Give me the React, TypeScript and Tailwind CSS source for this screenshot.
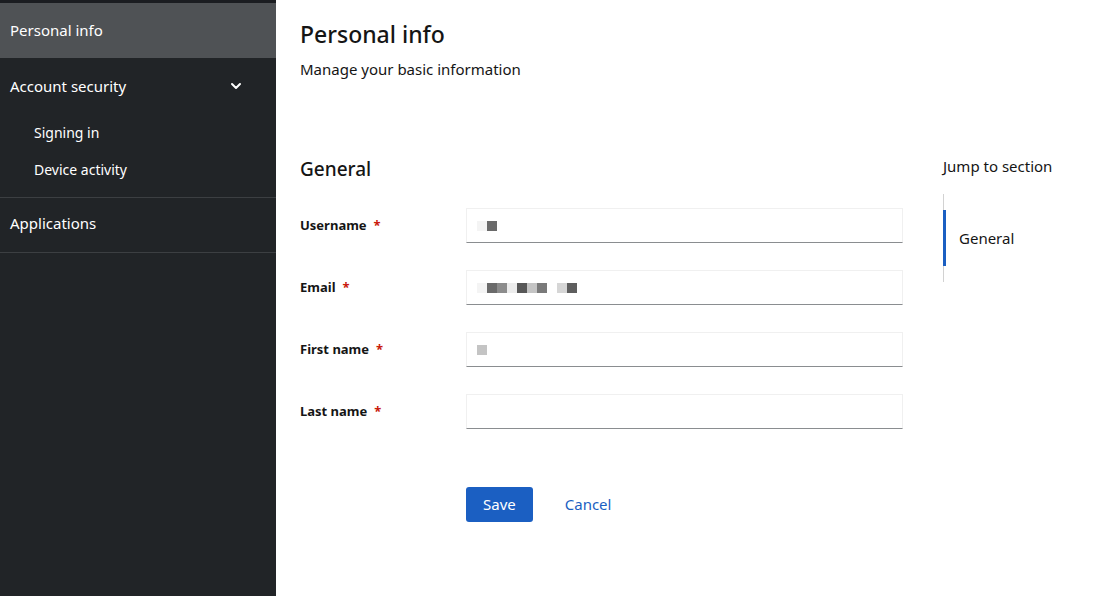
import { ChevronDown } from 'lucide-react';

const fields = [
  { label: 'Username', blocks: ['#f4f4f4', '#6a6a6a'] },
  { label: 'Email', blocks: ['#f4f4f4', '#6a6a6a', '#8c8c8c', '#ececec', '#575757', '#c4c4c4', '#7a7a7a', '#ffffff', '#d6d6d6', '#5e5e5e'] },
  { label: 'First name', blocks: ['#c4c4c4'] },
  { label: 'Last name', blocks: [] as string[] },
];

function Sidebar() {
  return (
    <nav className="w-[276px] shrink-0 bg-[#212427] text-white">
      <div className="h-[3px] bg-[#1b1d21]" />
      <div className="flex h-[55px] items-center bg-[#4f5255] px-[10px] text-[15px]">Personal info</div>
      <div className="border-b border-[#3c3f42] pb-[9px]">
        <div className="flex h-[56px] items-center justify-between pl-[10px] pr-[32px] text-[15px]">
          <span>Account security</span>
          <ChevronDown className="h-4 w-4" strokeWidth={3} />
        </div>
        <div className="flex h-[37px] items-center pl-[34px] text-[14px]">Signing in</div>
        <div className="flex h-[37px] items-center pl-[34px] text-[14px]">Device activity</div>
      </div>
      <div className="flex h-[55px] items-center border-b border-[#3c3f42] px-[10px] pb-[3px] text-[15px]">Applications</div>
    </nav>
  );
}

export default function App() {
  return (
    <div className="flex h-[596px] w-full bg-white font-['Noto_Sans',sans-serif] text-[#151515]">
      <Sidebar />
      <main className="flex flex-1">
        <div className="w-[627px] pl-[24px]">
          <h1 className="mt-[19px] text-[23px] font-medium leading-[30px]">Personal info</h1>
          <p className="mt-[8px] text-[15px] leading-[24px]">Manage your basic information</p>
          <h2 className="mt-[75px] text-[19px] font-medium leading-[26px]">General</h2>
          <form className="mt-[26px] flex flex-col gap-[27px]">
            {fields.map(f => (
              <div key={f.label} className="flex items-center">
                <label className="w-[166px] text-[13px] font-bold">
                  {f.label}
                  <span className="ml-[7px] text-[#c9190b]">*</span>
                </label>
                <div className="flex h-[35px] w-[437px] items-center border border-[#f0f0f0] border-b-[#8a8d90] px-[10px]">
                  {f.blocks.map((c, i) => (
                    <span key={i} className="h-[10px] w-[10px]" style={{ backgroundColor: c }} />
                  ))}
                </div>
              </div>
            ))}
            <div className="ml-[166px] mt-[31px] flex items-center gap-[16px]">
              <button type="button" className="h-[35px] rounded-[3px] bg-[#1b5fc2] px-[17px] text-[15px] text-white">Save</button>
              <button type="button" className="h-[35px] px-[16px] text-[15px] text-[#1b5fc2]">Cancel</button>
            </div>
          </form>
        </div>
        <aside className="pl-[40px] pt-[154px]">
          <div className="text-[15px] leading-[24px]">Jump to section</div>
          <div className="mt-[16px] border-l border-[#d2d2d2] py-[16px]">
            <div className="-ml-px flex h-[56px] items-center border-l-[3px] border-[#1b5fc2] pl-[13px] text-[15px]">General</div>
          </div>
        </aside>
      </main>
    </div>
  );
}
